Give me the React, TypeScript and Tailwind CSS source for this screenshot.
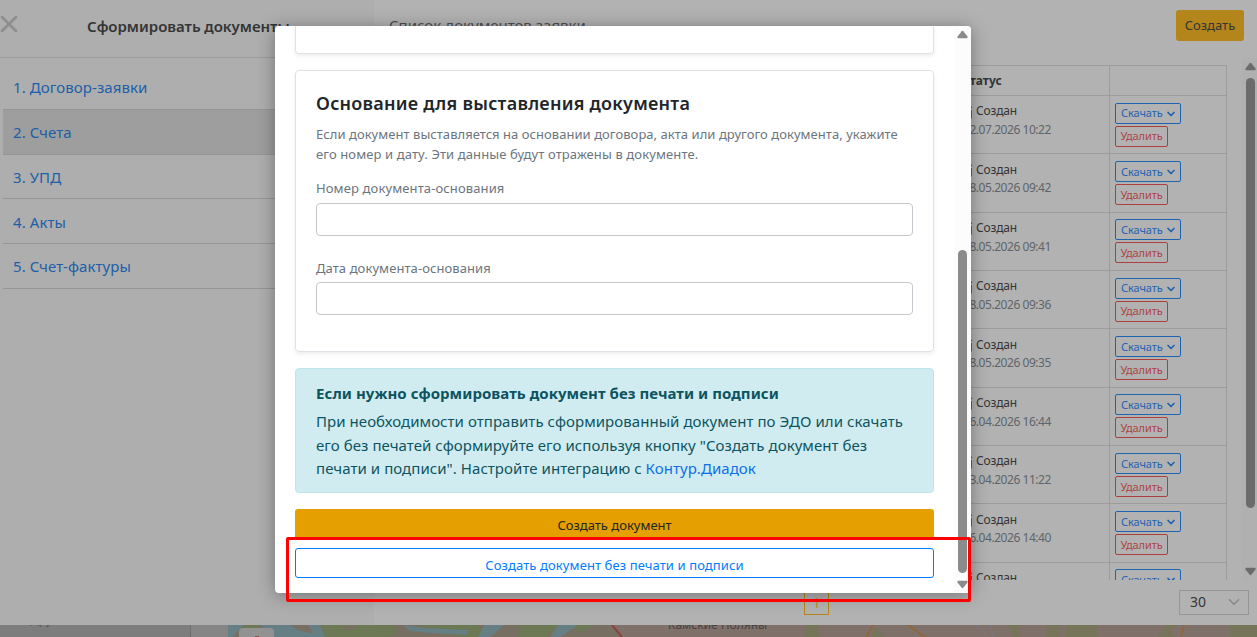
import { ChevronDown, X } from "lucide-react";

const menu = [
  { title: "1. Договор-заявки", active: false },
  { title: "2. Счета", active: true },
  { title: "3. УПД", active: false },
  { title: "4. Акты", active: false },
  { title: "5. Счет-фактуры", active: false },
];

const rows = [
  "22.07.2026 10:22",
  "28.05.2026 09:42",
  "28.05.2026 09:41",
  "28.05.2026 09:36",
  "28.05.2026 09:35",
  "16.04.2026 16:44",
  "13.04.2026 11:22",
  "06.04.2026 14:40",
  "06.04.2026 14:38",
];

function Sidebar() {
  return (
    <aside className="w-[374px] shrink-0 bg-[#aeaeae]">
      <div className="flex h-[58px] items-center border-b border-[#9b9b9b]">
        <X className="-ml-[5px] -mt-2.5 size-7 shrink-0 text-[#8e8e8e]" strokeWidth={2.2} />
        <h2 className="ml-16 -mt-1 whitespace-nowrap text-[15px] font-semibold tracking-[-0.02px] text-[#333537]">Сформировать документы</h2>
      </div>
      <ul className="ml-[3px] pt-[7px]">
        {menu.map((item) => (
          <li
            key={item.title}
            className={
              "flex h-[44.8px] items-center border-b border-[#959595] pl-2.5 pt-[1px] text-[15px] tracking-[0.08px] text-[#205fa8] " +
              (item.active ? "bg-[#9e9e9e]" : "")
            }
          >
            {item.title}
          </li>
        ))}
      </ul>
    </aside>
  );
}

function SignedIcon() {
  return (
    <svg viewBox="0 0 14 14" className="h-3.5 w-3.5 shrink-0 text-[#2f6db0]" fill="none" stroke="currentColor" strokeWidth="1.2">
      <path d="M9 3H2V13H12.4V5" />
      <path d="M5 9.5L11 3.5" />
      <path d="M11.6 2.6L12.6 1.6" strokeWidth="2.2" />
    </svg>
  );
}

function DocumentRow({ date }: { date: string }) {
  return (
    <div className="flex h-[58.35px] shrink-0 border-b border-[#9c9c9c]">
      <div className="w-[570px] shrink-0 border-l border-[#9c9c9c]" />
      <div className="w-[151px] shrink-0 border-r border-[#9c9c9c] pt-[6.4px] text-xs leading-[18.5px]">
        <div className="flex items-center gap-[3px] tracking-[-0.15px] text-[#333537]">
          <SignedIcon />
          Создан
        </div>
        <div className="pl-1 tracking-[-0.45px] text-[#5f656a]">{date}</div>
      </div>
      <div className="flex w-[117px] shrink-0 flex-col items-start gap-[2px] border-r border-[#9c9c9c] pl-[5px] pt-[6.7px] text-[11px]">
        <button className="flex h-[21px] w-[66px] items-center justify-between rounded-[2px] border border-[#1f63b0] pl-[5px] pr-[3px] pt-[1px] tracking-[-0.1px] text-[#1f63b0]">
          Скачать
          <ChevronDown className="size-3" strokeWidth={3.4} />
        </button>
        <button className="flex h-[21px] w-[53px] items-center justify-center rounded-[2px] border border-[#ad3f3f] pt-[1px] tracking-[-0.1px] text-[#ad4545]">Удалить</button>
      </div>
    </div>
  );
}

function Documents() {
  return (
    <section className="flex min-w-0 flex-1 flex-col bg-[#b2b2b2]">
      <header className="flex h-[58px] shrink-0 items-start justify-between pl-[15px] pr-[13px] pt-2.5">
        <h2 className="pt-1 text-[15px] text-[#4b4d4f]">Список документов заявки</h2>
        <button className="h-[31px] w-[68px] rounded-[3px] bg-[#b3851a] pt-[1px] text-[13px] text-[#333537]">Создать</button>
      </header>
      <div className="flex h-[522px] shrink-0 justify-between overflow-hidden">
        <div className="flex flex-col pl-[15px] pt-[7px]">
          <div className="flex h-[31px] shrink-0 border-y border-[#9c9c9c] text-xs font-bold text-[#333537]">
            <div className="w-[570px] shrink-0 border-l border-[#9c9c9c]" />
            <div className="flex w-[151px] shrink-0 items-center border-r border-[#9c9c9c] pl-[3px]">Статус</div>
            <div className="w-[117px] shrink-0 border-r border-[#9c9c9c]" />
          </div>
          {rows.map((date) => (
            <DocumentRow key={date} date={date} />
          ))}
        </div>
        <div className="flex w-[15px] flex-col items-center bg-[#b0b0b0] pl-[1px] pt-[3.5px]">
          <Arrow className="text-[#6b6b6b]" />
          <div className="mt-[7px] h-[430px] w-[9px] rounded-full bg-[#6b6b6b]" />
          <Arrow className="mt-[59px] rotate-180 text-[#6b6b6b]" />
        </div>
      </div>
      <footer className="flex flex-1 items-center pb-[1px] pr-2">
        <div className="ml-[430px] flex h-[25px] w-[25px] items-center justify-center border border-[#b3851a] pt-[1px] text-sm text-[#c0892d]">1</div>
        <div className="ml-auto flex h-[25px] w-[70px] items-center justify-between border border-[#959595] pl-2.5 pr-[5px] text-sm text-[#333537]">
          30
          <ChevronDown className="size-[18px] text-[#8a8a8a]" strokeWidth={2.2} />
        </div>
      </footer>
    </section>
  );
}

function Arrow({ className = "" }: { className?: string }) {
  return (
    <svg viewBox="0 0 11 9" className={"h-[9px] w-[11px] shrink-0 " + className} fill="currentColor">
      <path d="M4.7 1.2Q5.5 0.3 6.3 1.2L10.5 6.6Q11 8.2 9.7 8.2H1.3Q0 8.2 0.5 6.6Z" />
    </svg>
  );
}

function MapStrip() {
  return (
    <div className="relative flex h-3 overflow-hidden bg-[#7f7069]">
      <div className="w-[191px] shrink-0 border-r border-[#6d6d6d] bg-[#7d7d7d]" />
      <div className="w-[37px] shrink-0 bg-[#858585]" />
      <svg viewBox="0 0 1029 12" className="h-3 w-[1029px] shrink-0">
        <path d="M0 0H386L394 12H0Z" fill="#786f63" />
        <path d="M14 0H32L24 6H10ZM92 0H120L108 12H98ZM128 0H164Q176 8 158 12H90Q104 4 128 4ZM190 0H250L262 12H236L208 6ZM292 0H330L318 12H290ZM344 0H366L352 8Z" fill="#6d7855" />
        <path d="M0 0H16L4 12H0ZM34 0H62Q74 9 88 8V12H40ZM80 0H92L97 12H88ZM176 0L196 3 240 5V10L204 8 182 6ZM256 0H276L262 12H250ZM330 0H350L332 12H322Z" fill="#657f85" />
        <path d="M647 2L656 12H643ZM575 2L582 12H576ZM577 0H591V12H577ZM780 0L786 12H792V0ZM820 0H832V12H818ZM838 0H869V12H838ZM938 0H950L942 6L948 12H930ZM1002 0H1029V12H1002Z" fill="#747655" opacity="0.8" />
        <path d="M384 0L394 12" stroke="#8e403d" strokeWidth="2" />
        <path d="M748 0L760 12M762 0L766 12" stroke="#777988" strokeWidth="1" />
        <path d="M645 0L638 12M680 0L697 12M956 0L953 12" fill="none" stroke="#946536" strokeWidth="1.6" />
      </svg>
      <span className="absolute left-[668px] -top-[8px] text-[12px] leading-4 text-[#484243]">Камские Поляны</span>
      <span className="absolute left-[30px] -top-[13px] text-[12px] leading-4 text-[#555]">Другой</span>
      <div className="absolute left-[239px] top-[3px] flex h-8 w-[35px] justify-center rounded-t-[4px] bg-[#929292]">
        <span className="mt-2 h-2 w-1 bg-[#92484b]" />
      </div>
    </div>
  );
}

function Modal() {
  return (
    <div className="absolute left-[275px] top-[26px] flex h-[567px] w-[696px] overflow-hidden rounded-[4px] bg-white shadow-[0_2px_18px_rgba(0,0,0,0.35)]">
      <div className="flex w-[679px] shrink-0 flex-col px-5">
        <div className="h-7 shrink-0 rounded-b-[4px] border border-t-0 border-[#dee2e6] shadow-[0_2px_4px_rgba(0,0,0,0.075)]" />
        <section className="mt-4 h-[282px] shrink-0 rounded-[4px] border border-[#dee2e6] px-5 pt-5 shadow-[0_2px_4px_rgba(0,0,0,0.075)]">
          <h3 className="text-lg font-semibold leading-6 tracking-[0.25px] text-[#212529]">Основание для выставления документа</h3>
          <p className="mt-[9px] whitespace-nowrap text-[13px] leading-5 tracking-[0.045px] text-[#6c757d]">
            Если документ выставляется на основании договора, акта или другого документа, укажите
            <br />
            <span className="tracking-[0.11px]">его номер и дату. Эти данные будут отражены в документе.</span>
          </p>
          <label className="mt-[14px] block text-[13px] leading-5 tracking-[0.12px] text-[#6c757d]">Номер документа-основания</label>
          <input className="mt-[5px] block h-[33px] w-[597px] rounded-[4px] border border-[#c4c8cc]" />
          <label className="mt-[22px] block text-[13px] leading-5 tracking-[0.08px] text-[#6c757d]">Дата документа-основания</label>
          <input className="mt-1 block h-[33px] w-[597px] rounded-[4px] border border-[#c4c8cc]" />
        </section>
        <section className="mt-4 h-[125px] shrink-0 whitespace-nowrap rounded-[4px] border border-[#bee5eb] bg-[#d1ecf1] px-5 pt-[13px] text-[15px] leading-[23.3px] tracking-[0.055px] text-[#0c5460]">
          <h4 className="mb-[5px] font-bold">Если нужно сформировать документ без печати и подписи</h4>
          <p>При необходимости отправить сформированный документ по ЭДО или скачать</p>
          <p>его без печатей сформируйте его используя кнопку "Создать документ без</p>
          <p>
            печати и подписи". Настройте интеграцию с <span className="text-[#0d6fe8]">Контур.Диадок</span>
          </p>
        </section>
        <button className="mt-4 h-[31px] shrink-0 rounded-[3px] bg-[#e5a000] pt-[2px] text-[13px] text-[#212529]">Создать документ</button>
        <button className="mt-2 h-[30px] shrink-0 rounded-[3px] border border-[#007bff] pt-[3px] text-[13px] leading-5 tracking-[0.1px] text-[#007bff]">
          Создать документ без печати и подписи
        </button>
      </div>
      <div className="flex flex-1 flex-col items-center bg-[#fcfcfc] pt-1">
        <Arrow className="text-[#8b8b8b]" />
        <div className="mt-[211px] h-[323px] w-[9px] rounded-full bg-[#8b8b8b]" />
        <Arrow className="mt-[7px] rotate-180 text-[#8b8b8b]" />
      </div>
    </div>
  );
}

export default function App() {
  return (
    <div className="relative h-[637px] w-[1257px] overflow-hidden font-['Noto_Sans','Open_Sans',sans-serif]">
      <div className="flex h-[625px]">
        <Sidebar />
        <Documents />
      </div>
      <MapStrip />
      <Modal />
      {/* выделение кнопки */}
      <div className="pointer-events-none absolute left-[286px] top-[537px] h-[65px] w-[685px] rounded-[2px] border-3 border-[#ff0000]" />
    </div>
  );
}
